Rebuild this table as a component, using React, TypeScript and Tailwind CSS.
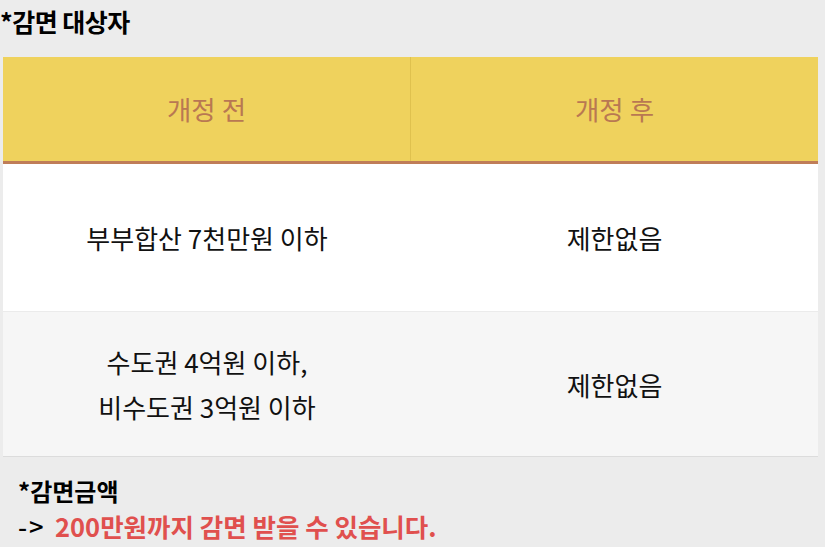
import React from "react";

const font = { fontFamily: '"Noto Sans CJK KR", "Noto Sans", sans-serif' };

export default function App() {
  return (
    <div
      className="w-[825px] h-[547px] overflow-hidden bg-[#ececec] text-[#111]"
      style={font}
    >
      <div className="h-[57px]">
        <div className="text-[25px] font-bold leading-[42px] tracking-[-0.5px] text-black">
          *감면 대상자
        </div>
      </div>

      <div className="ml-[3px] w-[815px]">
        <div className="flex h-[107px] bg-[#efd25d] border-b-[3px] border-[#bf7d58]">
          <div className="flex w-[408px] items-center justify-center border-r border-[#dfc14e] text-[26.5px] text-[#b97852]">
            개정 전
          </div>
          <div className="flex flex-1 items-center justify-center text-[26.5px] text-[#b97852]">
            개정 후
          </div>
        </div>
        <div className="flex h-[147px] bg-white text-[26px]">
          <div className="flex w-[408px] items-center justify-center">
            부부합산 7천만원 이하
          </div>
          <div className="flex flex-1 items-center justify-center">
            제한없음
          </div>
        </div>
        <div className="flex h-[146px] bg-[#f6f6f6] border-t border-[#ebebeb] border-b border-b-[#dcdcdc] text-[26px]">
          <div className="flex w-[408px] items-center justify-center text-center leading-[45px]">
            <div>
              수도권 4억원 이하,
              <br />
              비수도권 3억원 이하
            </div>
          </div>
          <div className="flex flex-1 items-center justify-center">
            제한없음
          </div>
        </div>
      </div>

      <div className="pl-[18px] pt-[17px]">
        <div className="text-[24px] font-bold leading-[34px] text-black">
          *감면금액
        </div>
        <div className="flex items-center text-[25.5px] font-bold leading-[36px]">
          <span className="w-[37px] shrink-0 font-medium tracking-[2px] text-black">-&gt;</span>
          <span className="text-[#e0504e]">200만원까지 감면 받을 수 있습니다.</span>
        </div>
      </div>
    </div>
  );
}
